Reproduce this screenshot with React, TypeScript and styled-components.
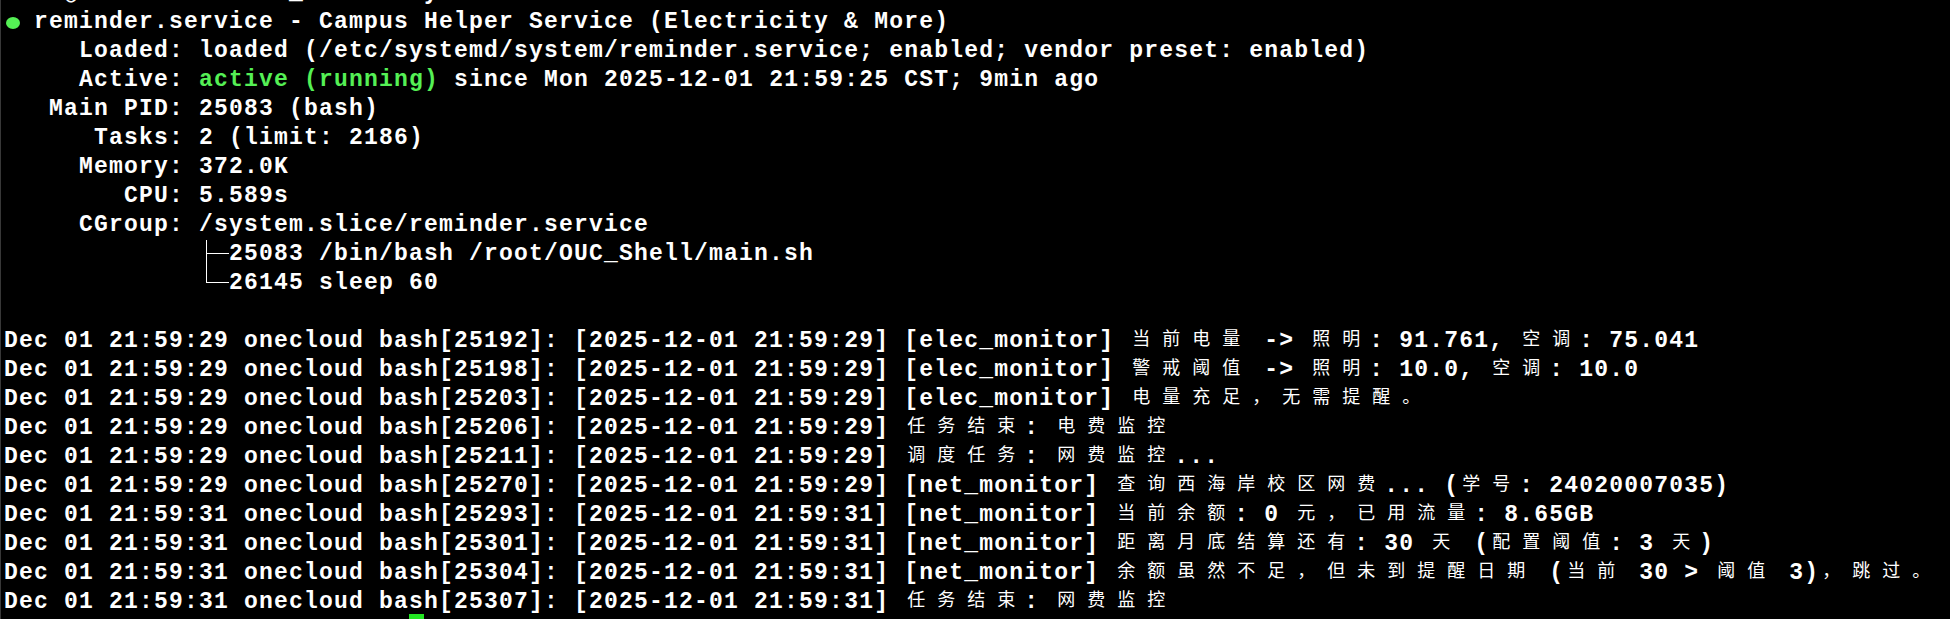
import React from "react";
import styled, { createGlobalStyle } from "styled-components";

const GlobalStyle = createGlobalStyle`
  html, body {
    margin: 0;
    padding: 0;
    background: #000;
  }
  body {
    width: 1950px;
    height: 619px;
    overflow: hidden;
  }
  #root {
    height: 619px;
    overflow: hidden;
  }
`;

const Screen = styled.main`
  box-sizing: border-box;
  min-height: 680px;
  margin-top: -21px;
  padding-left: 3px;
  border-left: 1px solid #383838;
  background: #000;
  color: #fff;
  font-family: "Liberation Mono", "DejaVu Sans Mono", monospace;
  font-weight: 700;
  font-size: 23px;
  letter-spacing: 1.2px;
  line-height: 29px;
`;

const Line = styled.div`
  height: 29px;
  white-space: pre;
`;

const Green = styled.span`
  color: #55f055;
`;

const StatusDot = styled.span`
  display: inline-block;
  vertical-align: top;
  width: 14px;
  height: 12px;
  margin: 9px -1px 0 2px;
  border-radius: 50%;
  background: #55f055;
`;

const Wide = styled.span`
  display: inline-block;
  box-sizing: border-box;
  width: 30px;
  padding-left: 3px;
  font-family: "Noto Sans CJK SC", "Noto Sans CJK TC", sans-serif;
  font-weight: 400;
  font-size: 18px;
  letter-spacing: 0;
  line-height: 1;
  vertical-align: 2px;
  white-space: pre;
`;

const TreeBranch = styled.span<{ $last?: boolean }>`
  display: inline-block;
  position: relative;
  vertical-align: top;
  width: 30px;
  height: 29px;
  &::before {
    content: "";
    position: absolute;
    left: 7px;
    top: 0;
    width: 1px;
    height: ${(p) => (p.$last ? "14px" : "29px")};
    background: #fff;
  }
  &::after {
    content: "";
    position: absolute;
    left: 7px;
    right: 0;
    top: 13px;
    height: 1px;
    background: #fff;
  }
`;

const Cursor = styled.span`
  display: inline-block;
  vertical-align: top;
  width: 15px;
  height: 29px;
  margin-top: -3px;
  background: #22e622;
`;

const WIDE_RE = /[\u2E80-\u9FFF\u3000-\u303F\uFF00-\uFFEF]/;

function Term({ text }: { text: string }) {
  const parts: React.ReactNode[] = [];
  let buf = "";
  Array.from(text).forEach((ch, i) => {
    if (WIDE_RE.test(ch)) {
      if (buf) {
        parts.push(<React.Fragment key={`t${i}`}>{buf}</React.Fragment>);
        buf = "";
      }
      parts.push(<Wide key={`w${i}`}>{ch}</Wide>);
    } else {
      buf += ch;
    }
  });
  if (buf) parts.push(<React.Fragment key="end">{buf}</React.Fragment>);
  return <>{parts}</>;
}

const PROMPT = "root@onecloud:~/OUC_Shell# ";

const statusLines = [
  "     Loaded: loaded (/etc/systemd/system/reminder.service; enabled; vendor preset: enabled)",
];

const infoLines = [
  "   Main PID: 25083 (bash)",
  "      Tasks: 2 (limit: 2186)",
  "     Memory: 372.0K",
  "        CPU: 5.589s",
  "     CGroup: /system.slice/reminder.service",
];

const logs: [string, string, string][] = [
  ["21:59:29", "25192", "[elec_monitor] 当前电量 -> 照明: 91.761, 空调: 75.041"],
  ["21:59:29", "25198", "[elec_monitor] 警戒阈值 -> 照明: 10.0, 空调: 10.0"],
  ["21:59:29", "25203", "[elec_monitor] 电量充足，无需提醒。"],
  ["21:59:29", "25206", "任务结束: 电费监控"],
  ["21:59:29", "25211", "调度任务: 网费监控..."],
  ["21:59:29", "25270", "[net_monitor] 查询西海岸校区网费... (学号: 24020007035)"],
  ["21:59:31", "25293", "[net_monitor] 当前余额: 0 元，已用流量: 8.65GB"],
  ["21:59:31", "25301", "[net_monitor] 距离月底结算还有: 30 天 (配置阈值: 3 天)"],
  ["21:59:31", "25304", "[net_monitor] 余额虽然不足，但未到提醒日期 (当前 30 > 阈值 3)，跳过。"],
  ["21:59:31", "25307", "任务结束: 网费监控"],
];

export default function App() {
  return (
    <>
      <GlobalStyle />
      <Screen>
        <Line>{PROMPT}systemctl status reminder</Line>
        <Line>
          <StatusDot />
          {" reminder.service - Campus Helper Service (Electricity & More)"}
        </Line>
        {statusLines.map((l) => (
          <Line key={l}>{l}</Line>
        ))}
        <Line>
          {"     Active: "}
          <Green>active (running)</Green>
          {" since Mon 2025-12-01 21:59:25 CST; 9min ago"}
        </Line>
        {infoLines.map((l) => (
          <Line key={l}>{l}</Line>
        ))}
        <Line>
          {"             "}
          <TreeBranch />
          {"25083 /bin/bash /root/OUC_Shell/main.sh"}
        </Line>
        <Line>
          {"             "}
          <TreeBranch $last />
          {"26145 sleep 60"}
        </Line>
        <Line />
        {logs.map(([time, pid, msg]) => (
          <Line key={pid}>
            <Term text={`Dec 01 ${time} onecloud bash[${pid}]: [2025-12-01 ${time}] ${msg}`} />
          </Line>
        ))}
        <Line>
          {PROMPT}
          <Cursor />
        </Line>
      </Screen>
    </>
  );
}
